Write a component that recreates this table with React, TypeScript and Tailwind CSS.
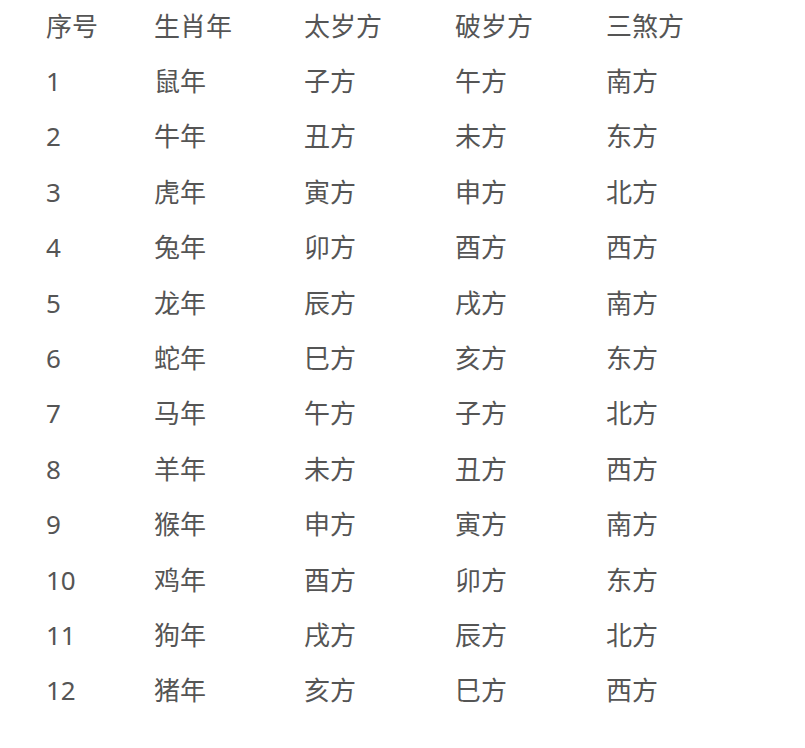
const rows: string[][] = [
  ["序号", "生肖年", "太岁方", "破岁方", "三煞方"],
  ["1", "鼠年", "子方", "午方", "南方"],
  ["2", "牛年", "丑方", "未方", "东方"],
  ["3", "虎年", "寅方", "申方", "北方"],
  ["4", "兔年", "卯方", "酉方", "西方"],
  ["5", "龙年", "辰方", "戌方", "南方"],
  ["6", "蛇年", "巳方", "亥方", "东方"],
  ["7", "马年", "午方", "子方", "北方"],
  ["8", "羊年", "未方", "丑方", "西方"],
  ["9", "猴年", "申方", "寅方", "南方"],
  ["10", "鸡年", "酉方", "卯方", "东方"],
  ["11", "狗年", "戌方", "辰方", "北方"],
  ["12", "猪年", "亥方", "巳方", "西方"],
];

export default function App() {
  return (
    <div
      className="w-[805px] h-[748px] bg-white text-[#555555] text-[26px] overflow-hidden"
      style={{ fontFamily: '"Noto Sans", "Noto Sans CJK SC", sans-serif' }}
    >
      <div className="pl-[46px] -mt-[2px]">
        {rows.map((r, i) => (
          <div key={i} className="flex h-[55.4px] items-center leading-none">
            <div className="w-[108px]">{r[0]}</div>
            <div className="w-[150px]">{r[1]}</div>
            <div className="w-[151px]">{r[2]}</div>
            <div className="w-[151px]">{r[3]}</div>
            <div className="w-[151px]">{r[4]}</div>
          </div>
        ))}
      </div>
    </div>
  );
}
